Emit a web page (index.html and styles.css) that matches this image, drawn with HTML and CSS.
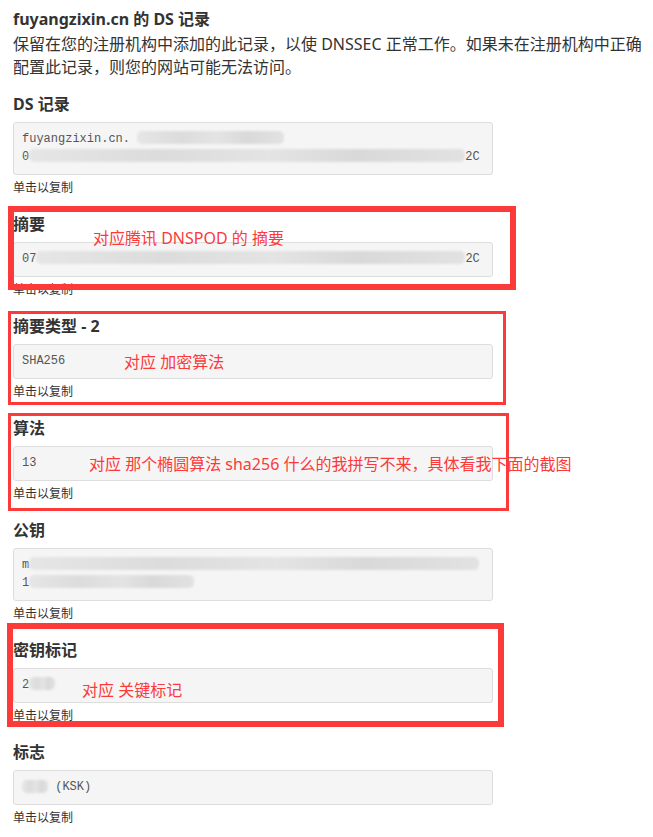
FILE: index.html
```html
<!DOCTYPE html>
<html lang="zh-CN">
<head>
  <meta charset="UTF-8">
  <meta name="viewport" content="width=device-width, initial-scale=1.0">
  <title>DS 记录</title>
  <link rel="stylesheet" href="styles.css">
</head>
<body>
<div class="page">

  <h1 class="title">fuyangzixin.cn 的 DS 记录</h1>
  <p class="desc">保留在您的注册机构中添加的此记录，以使 DNSSEC 正常工作。如果未在注册机构中正确配置此记录，则您的网站可能无法访问。</p>

  <div class="field">
    <h3>DS 记录</h3>
    <div class="value">fuyangzixin.cn. <span class="blur w-head"></span><br>0<span class="blur w-full"></span>2C</div>
    <div class="hint">单击以复制</div>
  </div>

  <div class="field">
    <h3>摘要</h3>
    <div class="value">07<span class="blur w-digest"></span>2C</div>
    <div class="hint">单击以复制</div>
  </div>

  <div class="field">
    <h3>摘要类型 - 2</h3>
    <div class="value">SHA256</div>
    <div class="hint">单击以复制</div>
  </div>

  <div class="field">
    <h3>算法</h3>
    <div class="value">13</div>
    <div class="hint">单击以复制</div>
  </div>

  <div class="field">
    <h3>公钥</h3>
    <div class="value">m<span class="blur w-key"></span><br>1<span class="blur w-tail"></span></div>
    <div class="hint">单击以复制</div>
  </div>

  <div class="field">
    <h3>密钥标记</h3>
    <div class="value">2<span class="blur w-tag"></span></div>
    <div class="hint">单击以复制</div>
  </div>

  <div class="field">
    <h3>标志</h3>
    <div class="value"><span class="blur w-flag"></span> (KSK)</div>
    <div class="hint">单击以复制</div>
  </div>

  <!-- annotations drawn over the screenshot -->
  <div class="mark mark-digest"></div>
  <div class="mark thin mark-type"></div>
  <div class="mark thin mark-algo"></div>
  <div class="mark mark-tag"></div>

  <span class="note note-digest">对应腾讯 DNSPOD 的 摘要</span>
  <span class="note note-type">对应 加密算法</span>
  <span class="note note-algo">对应 那个椭圆算法 sha256 什么的我拼写不来，具体看我下面的截图</span>
  <span class="note note-tag">对应 关键标记</span>

</div>
</body>
</html>
```

FILE: styles.css
```css
body {
  margin: 0;
  background: #fff;
  color: #333;
  font-family: "Noto Sans", "Noto Sans CJK SC", sans-serif;
}

.page {
  position: relative;
  padding: 8px 0 0 13px;
  height: 829px;
  overflow: hidden;
}

.title {
  margin: 0;
  font-size: 16px;
  line-height: 22px;
  font-weight: bold;
}

.desc {
  margin: 3px 0 14px;
  font-size: 16px;
  line-height: 23px;
}

.field {
  margin-bottom: 16px;
}

.field h3 {
  margin: 0 0 7px;
  font-size: 16px;
  line-height: 22px;
  font-weight: bold;
}

.value {
  box-sizing: border-box;
  width: 480px;
  padding: 7px 9px 8px 8px;
  background: #f5f5f5;
  border: 1px solid #ddd;
  border-radius: 3px;
  font-family: "Liberation Mono", monospace;
  font-size: 12px;
  line-height: 18px;
  color: #555;
  white-space: nowrap;
}

.hint {
  margin-top: 4px;
  font-size: 12px;
  line-height: 18px;
}

/* redacted parts of the values */
.blur {
  display: inline-block;
  height: 13px;
  vertical-align: -2px;
  background: linear-gradient(90deg, #e6e6e6, #dcdcdc 30%, #e4e4e4 55%, #d9d9d9 75%, #e2e2e2);
  border-radius: 5px;
  filter: blur(1px);
}

.w-head { width: 147px; }
.w-full { width: 436px; }
.w-digest { width: 429px; }
.w-key { width: 450px; }
.w-tail { width: 165px; }
.w-tag { width: 26px; }
.w-flag { width: 26px; vertical-align: -3px; }

/* red boxes and notes */
.mark {
  position: absolute;
  box-sizing: border-box;
  border: 6px solid #fc3a3a;
}

.mark.thin {
  border-width: 3px;
}

.mark-digest { left: 8px; top: 206px; width: 508px; height: 84px; }
.mark-type { left: 8px; top: 311px; width: 498px; height: 94px; }
.mark-algo { left: 8px; top: 413px; width: 501px; height: 98px; border-bottom-width: 4px; }
.mark-tag { left: 7px; top: 623px; width: 497px; height: 104px; }

.note {
  position: absolute;
  font-size: 16px;
  line-height: 20px;
  color: #fc3a3a;
  white-space: nowrap;
}

.note-digest { left: 93px; top: 228px; }
.note-type { left: 124px; top: 352px; }
.note-algo { left: 89px; top: 454px; }
.note-tag { left: 82px; top: 680px; }
```
